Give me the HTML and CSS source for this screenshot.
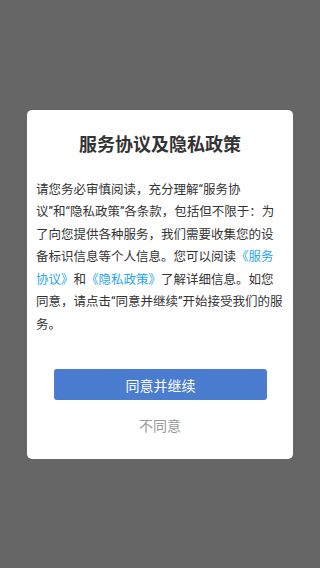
FILE: index.html
```html
<!DOCTYPE html>
<html lang="zh-CN">
<head>
<meta charset="utf-8">
<title>服务协议及隐私政策</title>
<link rel="stylesheet" href="styles.css">
</head>
<body>
<div class="overlay">
  <div class="dialog">
    <h1 class="title">服务协议及隐私政策</h1>
    <p class="body">请您务必审慎阅读，充分理解“服务协<br>议”和“隐私政策”各条款，包括但不限于：为<br>了向您提供各种服务，我们需要收集您的设<br>备标识信息等个人信息。您可以阅读<span class="link">《服务<br>协议》</span>和<span class="link">《隐私政策》</span>了解详细信息。如您<br>同意，请点击“同意并继续”开始接受我们的服<br>务。</p>
    <button class="agree" type="button">同意并继续</button>
    <div class="disagree">不同意</div>
  </div>
</div>
</body>
</html>
```
FILE: styles.css
```css
html, body {
  margin: 0;
  padding: 0;
}
body {
  background: #666666;
  font-family: Roboto, "Noto Sans CJK SC", sans-serif;
}
.overlay {
  width: 320px;
  height: 568px;
  display: flex;
  align-items: center;
  justify-content: center;
}
.dialog {
  width: 266px;
  height: 349px;
  box-sizing: border-box;
  background: #ffffff;
  border-radius: 5px;
  padding: 21px 0 0;
  display: flex;
  flex-direction: column;
}
.title {
  margin: 0;
  font-size: 18px;
  line-height: 27px;
  font-weight: 700;
  color: #333333;
  text-align: center;
}
.body {
  margin: 21px 0 0;
  padding: 0 9px;
  font-size: 12.5px;
  line-height: 22.5px;
  color: #333333;
  white-space: nowrap;
}
.link {
  color: #2aa6ea;
}
.agree {
  margin: 33px 26px 0 27px;
  height: 31px;
  border: none;
  border-radius: 3px;
  background: #4a7cd0;
  color: #ffffff;
  font-family: Roboto, "Noto Sans CJK SC", sans-serif;
  font-size: 14px;
  padding: 0;
}
.disagree {
  margin-top: 15px;
  text-align: center;
  font-size: 14px;
  line-height: 22px;
  color: #999999;
}
```
